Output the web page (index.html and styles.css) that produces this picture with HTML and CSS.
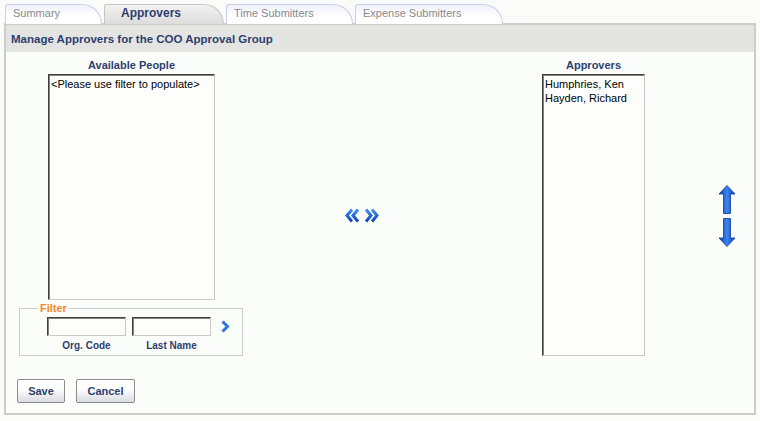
FILE: index.html
```html
<!DOCTYPE html>
<html>
<head>
<meta charset="utf-8">
<link rel="stylesheet" href="styles.css">
</head>
<body>
<div class="tabs">
  <div class="tab tab-summary">Summary</div>
  <div class="tab tab-active tab-approvers">Approvers</div>
  <div class="tab tab-time">Time Submitters</div>
  <div class="tab tab-expense">Expense Submitters</div>
</div>
<div class="panel">
  <div class="panel-head">Manage Approvers for the COO Approval Group</div>
  <div class="panel-body">
    <div class="lists">
      <div class="left-col">
        <div class="list-wrap avail">
          <div class="list-label">Available People</div>
          <div class="listbox avail-box"><div class="opt">&lt;Please use filter to populate&gt;</div></div>
        </div>
        <fieldset class="filter">
          <legend>Filter</legend>
          <div class="filter-row">
            <div class="field">
              <div class="input"></div>
              <div class="field-label">Org. Code</div>
            </div>
            <div class="field">
              <div class="input"></div>
              <div class="field-label">Last Name</div>
            </div>
            <svg class="go" width="9" height="13" viewBox="0 0 9 13">
              <path d="M1.5 1.5 L6.5 6.5 L1.5 11.5" fill="none" stroke="#2a78d8" stroke-width="3"/>
            </svg>
          </div>
        </fieldset>
      </div>
      <div class="mid-col">
        <svg width="36" height="15" viewBox="0 0 36 15">
          <defs>
            <linearGradient id="cg" x1="0" y1="0" x2="0" y2="1">
              <stop offset="0" stop-color="#3f8ef0"/>
              <stop offset="1" stop-color="#0b45b8"/>
            </linearGradient>
          </defs>
          <path d="M7 1.5 L2 7.5 L7 13.5 M13 1.5 L8 7.5 L13 13.5" fill="none" stroke="url(#cg)" stroke-width="3"/>
          <path d="M21 1.5 L26 7.5 L21 13.5 M27 1.5 L32 7.5 L27 13.5" fill="none" stroke="url(#cg)" stroke-width="3"/>
        </svg>
      </div>
      <div class="list-wrap appr">
        <div class="list-label">Approvers</div>
        <div class="listbox appr-box">
          <div class="opt">Humphries, Ken</div>
          <div class="opt">Hayden, Richard</div>
        </div>
      </div>
      <div class="updown">
        <svg width="18" height="29" viewBox="0 0 18 29">
          <defs>
            <linearGradient id="ag" x1="0" y1="0" x2="1" y2="0">
              <stop offset="0" stop-color="#0a3fb0"/>
              <stop offset="0.5" stop-color="#3d86ea"/>
              <stop offset="1" stop-color="#0a3fb0"/>
            </linearGradient>
          </defs>
          <path d="M9 0.5 L17 9 L12.5 9 L12.5 28.5 L5.5 28.5 L5.5 9 L1 9 Z" fill="url(#ag)" stroke="#0b3a9a" stroke-width="0.8"/>
        </svg>
        <svg width="18" height="29" viewBox="0 0 18 29">
          <path d="M9 28.5 L17 20 L12.5 20 L12.5 0.5 L5.5 0.5 L5.5 20 L1 20 Z" fill="url(#ag)" stroke="#0b3a9a" stroke-width="0.8"/>
        </svg>
      </div>
    </div>
    <div class="buttons">
      <div class="btn btn-save">Save</div>
      <div class="btn btn-cancel">Cancel</div>
    </div>
  </div>
</div>
</body>
</html>
```

FILE: styles.css
```css
body {
  margin: 0;
  background: #fbfcfa;
  font-family: "Liberation Sans", Arial, sans-serif;
  font-size: 11px;
  color: #000;
}
.tabs {
  display: flex;
  padding: 4px 0 0 5px;
  height: 19px;
  gap: 2px;
}
.tab {
  box-sizing: border-box;
  height: 20px;
  border: 1px solid #c9cfec;
  border-bottom: none;
  border-radius: 3px 22px 0 0;
  background: linear-gradient(#eef0fb, #ffffff 60%);
  color: #8a8a8a;
  font-size: 11px;
  line-height: 17px;
  padding-left: 7px;
}
.tab-summary { width: 97px; }
.tab-approvers { width: 120px; padding-left: 16px; }
.tab-time { width: 127px; }
.tab-expense { width: 148px; }
.tab-active {
  background: linear-gradient(#f2f2f2, #dcdcdc);
  border-color: #c6c6c6;
  color: #2d3e6e;
  font-weight: bold;
  font-size: 12px;
}
.panel {
  margin-left: 4px;
  width: 752px;
  box-sizing: border-box;
  height: 392px;
  border: 2px solid #cccccc;
  background: #fbfdfa;
}
.panel-head {
  height: 27px;
  box-sizing: border-box;
  background: #e4e5e2;
  color: #2d3e6e;
  font-weight: bold;
  font-size: 11.5px;
  line-height: 25px;
  padding: 2px 0 0 5px;
}
.panel-body {
  padding: 6px 0 0 11px;
}
.lists {
  display: flex;
  align-items: flex-start;
}
.left-col {
  width: 227px;
}
.list-label {
  height: 16px;
  line-height: 14px;
  text-align: center;
  font-weight: bold;
  color: #2d3e6e;
}
.avail {
  margin-left: 31px;
  width: 167px;
}
.listbox {
  box-sizing: border-box;
  border: 1px solid;
  border-color: #404040 #c8c8c8 #c8c8c8 #404040;
  box-shadow: inset 1px 1px 0 #808080;
  background: #fdfefc;
  padding: 2px 0 0 2px;
}
.avail-box { height: 226px; }
.opt { height: 14px; line-height: 14px; }
.filter {
  margin: 1px 0 0 2px;
  width: 224px;
  height: 55px;
  box-sizing: border-box;
  border: 1px solid #cccccc;
  padding: 0;
}
.filter legend {
  margin-left: 18px;
  padding: 0 2px;
  color: #f08a1e;
  font-weight: bold;
  font-size: 11px;
  line-height: 14px;
}
.filter-row {
  display: flex;
  align-items: flex-start;
  margin: 2px 0 0 27px;
  gap: 6px;
}
.field { width: 79px; }
.input {
  box-sizing: border-box;
  height: 19px;
  width: 79px;
  border: 1px solid;
  border-color: #404040 #c8c8c8 #c8c8c8 #404040;
  box-shadow: inset 1px 1px 0 #808080;
  background: #fdfefc;
}
.field-label {
  text-align: center;
  font-weight: bold;
  color: #2d3e6e;
  font-size: 10px;
  line-height: 19px;
}
.go { margin: 3px 0 0 4px; }
.mid-col {
  width: 298px;
  padding: 150px 0 0 101px;
  box-sizing: border-box;
}
.mid-col svg { display: block; }
.appr { width: 103px; }
.appr-box { height: 282px; }
.updown {
  margin: 127px 0 0 73px;
  display: flex;
  flex-direction: column;
  gap: 4px;
}
.updown svg { display: block; }
.buttons {
  display: flex;
  gap: 11px;
  margin-top: 23px;
}
.btn {
  box-sizing: border-box;
  height: 24px;
  border: 1px solid #8c8c8c;
  border-radius: 2px;
  background: linear-gradient(#ffffff 40%, #dadbe0);
  color: #2d3e6e;
  font-weight: bold;
  font-size: 11px;
  line-height: 22px;
  text-align: center;
}
.btn-save { width: 48px; }
.btn-cancel { width: 59px; }
```
